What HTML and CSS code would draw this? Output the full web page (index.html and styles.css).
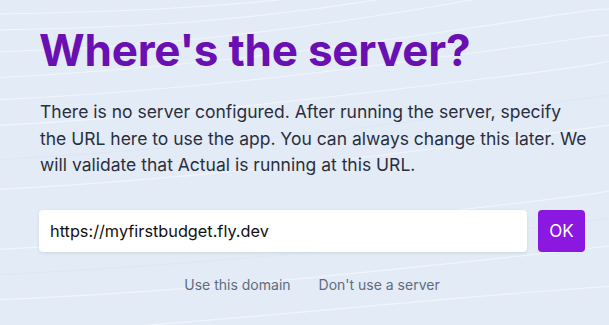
FILE: index.html
```html
<!DOCTYPE html>
<html lang="en">
<head>
<meta charset="utf-8">
<title>Where's the server?</title>
<link rel="stylesheet" href="styles.css">
</head>
<body>
<div class="bg" aria-hidden="true">
  <svg width="609" height="325" viewBox="0 0 609 325" preserveAspectRatio="none">
    <g fill="none" stroke="#f1f5fc" stroke-width="1.2">
      <path d="M-10 14 C 120 12, 220 8, 330 -6"/>
      <path d="M-10 30 C 140 28, 260 20, 400 -4"/>
      <path d="M-10 52 C 150 48, 300 30, 460 2 S 560 -8, 620 -10"/>
      <path d="M-10 78 C 160 70, 320 50, 470 28 S 570 12, 620 8"/>
      <path d="M-10 100 C 170 92, 330 72, 480 52 S 575 38, 620 34"/>
      <path d="M-10 126 C 180 116, 340 96, 490 78 S 580 64, 620 60"/>
      <path d="M-10 190 C 180 180, 350 160, 500 140 S 585 128, 620 124"/>
      <path d="M-10 250 C 180 240, 360 222, 510 204 S 590 192, 620 188"/>
      <path d="M-10 300 C 190 292, 370 272, 520 256 S 595 246, 620 242"/>
      <path d="M80 330 C 260 318, 420 300, 560 290 S 600 286, 620 284"/>
    </g>
    <g fill="none" stroke="#dde7f7" stroke-width="1">
      <path d="M-10 160 C 180 150, 350 130, 500 110 S 585 98, 620 94"/>
      <path d="M-10 275 C 185 266, 365 248, 515 230 S 592 220, 620 216"/>
    </g>
  </svg>
</div>
<main class="page">
  <h1 class="title">Where's the server?</h1>
  <p class="intro">There is no server configured. After running the server, specify<br>the URL here to use the app. You can always change this later. We<br>will validate that Actual is running at this URL.</p>
  <form class="url-row">
    <input class="url-input" type="text" value="https://myfirstbudget.fly.dev">
    <button class="ok-btn" type="button">OK</button>
  </form>
  <div class="links">
    <button class="link-btn" type="button">Use this domain</button>
    <button class="link-btn" type="button">Don't use a server</button>
  </div>
</main>
</body>
</html>
```
FILE: styles.css
```css
html, body {
  margin: 0;
  padding: 0;
}
body {
  width: 609px;
  height: 325px;
  overflow: hidden;
  background: #e3ebf6;
  font-family: Inter, "Noto Sans", sans-serif;
  position: relative;
}
.bg {
  position: absolute;
  inset: 0;
  z-index: 0;
}
.bg svg {
  display: block;
}
.page {
  position: relative;
  z-index: 1;
  padding: 24px 24px 0 39px;
  display: flex;
  flex-direction: column;
}
.title {
  margin: 0;
  font-size: 44px;
  line-height: 52px;
  font-weight: 700;
  color: #6a0fb2;
  letter-spacing: -0.2px;
}
.intro {
  margin: 23px 0 0 1px;
  font-size: 17.5px;
  line-height: 26.6px;
  color: #2a2f3d;
  white-space: nowrap;
}
.url-row {
  margin: 31px 0 0 0;
  display: flex;
  gap: 11px;
}
.url-input {
  flex: 1;
  height: 42px;
  box-sizing: border-box;
  border: none;
  border-radius: 4px;
  background: #ffffff;
  padding: 0 11px;
  font-family: Inter, "Noto Sans", sans-serif;
  font-size: 16.3px;
  color: #111111;
  box-shadow: 0 1px 3px rgba(40, 60, 100, 0.12);
  outline: none;
}
.ok-btn {
  width: 47px;
  height: 42px;
  border: none;
  border-radius: 4px;
  background: #8a18e0;
  color: #ffffff;
  font-family: Inter, "Noto Sans", sans-serif;
  font-size: 17px;
  padding: 0;
}
.links {
  margin-top: 24px;
  display: flex;
  justify-content: center;
  gap: 28px;
}
.link-btn {
  border: none;
  background: none;
  padding: 0;
  font-family: Inter, "Noto Sans", sans-serif;
  font-size: 14px;
  line-height: 17px;
  color: #5f6b80;
}
```
